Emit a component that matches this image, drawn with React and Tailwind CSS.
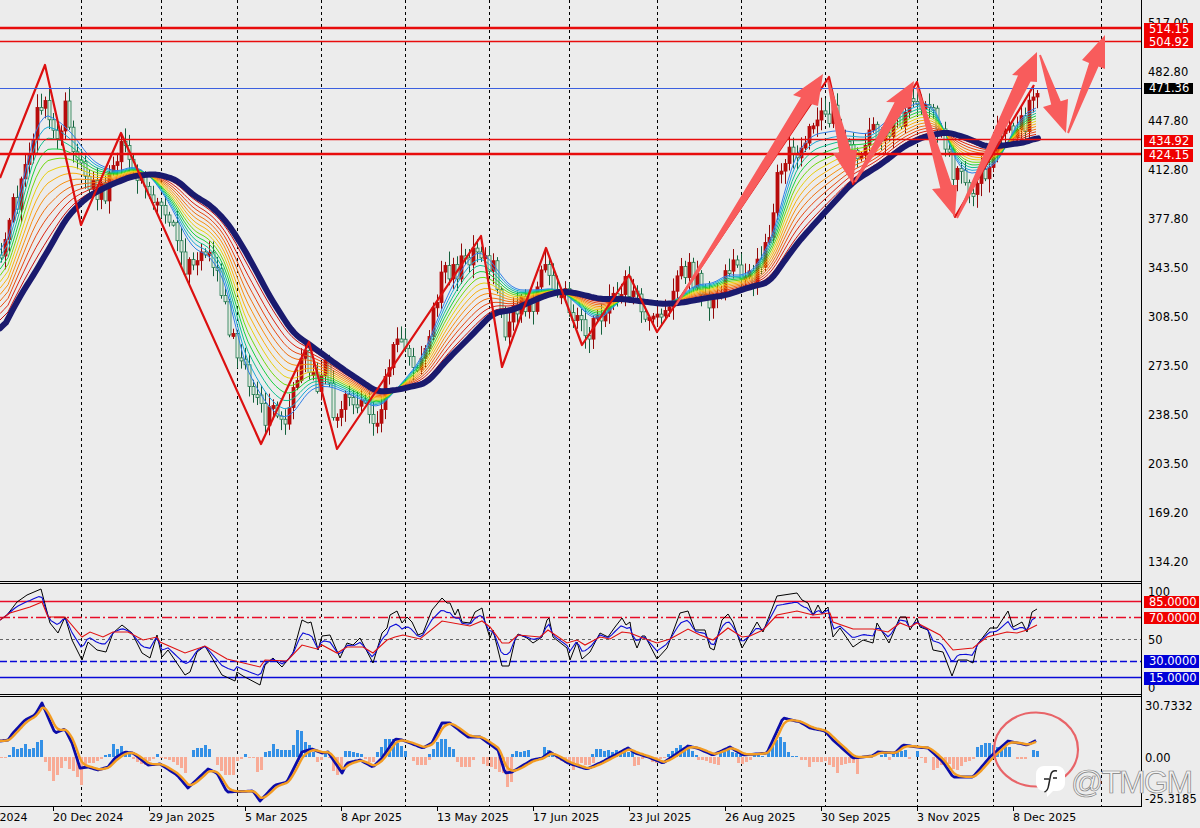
const gridX = [81.5, 161.5, 237.5, 321.5, 405.5, 489.5, 569.5, 657.5, 741.5, 825.5, 917.5, 993.5, 1101.5];

const priceTicks = ['517.00', '482.80', '447.80', '412.80', '377.80', '343.50', '308.50', '273.50', '238.50', '203.50', '169.20', '134.20'];

const dates = ['14 Nov 2024', '20 Dec 2024', '29 Jan 2025', '5 Mar 2025', '8 Apr 2025', '13 May 2025', '17 Jun 2025', '23 Jul 2025', '26 Aug 2025', '30 Sep 2025', '3 Nov 2025', '8 Dec 2025'];

// everything below is in page pixels, read off the picture
const navyPts = [[0,334],[20,296],[33,276],[50,247],[67,217],[87,197],[110,185],[133,176],[157,174],[177,180],[193,195],[210,205],[227,222],[243,247],[260,278],[270,297],[293,333],[317,350],[340,367],[377,392],[397,390],[427,383],[447,360],[470,337],[493,313],[513,310],[530,302],[547,295],[563,291],[580,294],[600,299],[623,299],[647,302],[663,304],[680,303],[707,298],[727,295],[747,288],[770,282],[780,267],[800,240],[827,210],[853,182],[883,163],[903,147],[923,137],[947,132],[967,138],[987,147],[1007,145],[1027,142],[1038,137]];

const fastPts = [[0,263],[15,215],[30,150],[40,113],[55,118],[67,128],[80,143],[90,160],[117,173],[133,165],[147,173],[160,188],[177,217],[190,247],[203,253],[213,257],[223,280],[230,293],[240,353],[257,390],[277,417],[293,417],[307,390],[327,385],[347,393],[363,400],[377,410],[387,400],[407,377],[423,357],[437,320],[453,283],[473,253],[483,250],[497,270],[513,290],[537,290],[557,288],[573,300],[593,320],[607,317],[617,300],[633,297],[657,307],[677,300],[697,283],[713,285],[727,273],[743,277],[760,263],[770,240],[780,215],[790,165],[810,135],[840,130],[870,135],[900,110],[925,100],[940,115],[950,150],[965,175],[987,170],[1003,157],[1013,127],[1037,103]];

const candlePts = [[0,255],[10,215],[20,190],[30,140],[40,100],[45,95],[50,120],[60,130],[65,105],[70,140],[80,170],[90,185],[100,190],[105,195],[115,150],[125,150],[135,170],[145,190],[155,205],[165,215],[175,235],[185,280],[195,250],[205,245],[215,270],[225,310],[235,345],[245,375],[255,400],[265,420],[275,415],[285,425],[295,385],[305,350],[315,385],[325,370],[335,420],[345,395],[355,400],[365,395],[375,425],[385,380],[395,345],[405,350],[415,360],[425,360],[435,300],[445,265],[455,270],[465,265],[475,240],[485,262],[495,275],[505,345],[515,300],[525,310],[535,300],[545,265],[555,305],[565,300],[575,320],[585,335],[595,320],[605,310],[615,295],[625,285],[635,295],[645,320],[655,320],[665,305],[675,285],[685,270],[695,280],[705,295],[715,300],[725,270],[735,265],[745,280],[755,275],[765,250],[775,190],[785,160],[795,150],[805,135],[815,130],[825,115],[835,115],[845,145],[855,155],[865,145],[875,130],[885,135],[895,120],[905,115],[915,95],[925,100],[935,120],[945,140],[955,175],[965,185],[975,190],[985,175],[995,140],[1005,130],[1015,125],[1025,125],[1035,90]];

const zigzag = [[0,178],[45,65],[81,225],[121,133],[261,444],[309,342],[337,449],[481,236],[502,367],[546,248],[582,345],[629,275],[657,332],[829,77],[853,184],[917,82],[955,217],[1034,85]];

const arrows = [
  { tail: [676,305], tip: [823,74], b1: [793,95], b2: [818,106], hw: 6 },
  { tail: [828,80], tip: [853,184], b1: [833,153], b2: [857,150], hw: 6 },
  { tail: [855,182], tip: [914,81], b1: [886,102], b2: [911,107], hw: 6 },
  { tail: [917,87], tip: [955,217], b1: [932,189], b2: [957,185], hw: 6 },
  { tail: [957,218], tip: [1037,52], b1: [1012,75], b2: [1037,82], hw: 7 },
  { tail: [1040,55], tip: [1066,133], b1: [1043,107], b2: [1068,99], hw: 5 },
  { tail: [1068,133], tip: [1105,35], b1: [1082,60], b2: [1105,69], hw: 5 },
];

const ribbonColors = ['#2f7fe8', '#18a8d8', '#10c090', '#18d040', '#70d810', '#e8d010', '#f8b010', '#f89010', '#f07010', '#e84810', '#dc2410', '#c81010'];

const rsiBlack = [[0,620],[7,615],[17,602],[27,595],[41,589],[50,623],[58,633],[65,617],[72,640],[82,660],[88,642],[97,650],[106,652],[113,633],[122,625],[132,633],[142,653],[150,658],[157,635],[162,657],[168,650],[185,675],[190,672],[197,652],[205,646],[222,675],[235,681],[237,672],[243,676],[260,685],[265,665],[273,658],[282,667],[293,653],[302,620],[308,623],[311,622],[318,650],[322,636],[330,635],[340,658],[347,643],[353,645],[360,638],[373,663],[382,633],[387,628],[390,615],[397,611],[402,623],[407,617],[412,622],[418,635],[423,633],[432,610],[442,598],[447,603],[450,603],[455,615],[458,609],[462,622],[470,623],[475,612],[482,608],[485,622],[490,638],[493,630],[502,666],[509,666],[515,640],[518,634],[527,638],[533,643],[542,637],[547,620],[549,618],[553,637],[567,648],[570,660],[577,642],[582,659],[590,652],[600,633],[608,637],[615,627],[622,618],[626,625],[630,622],[632,635],[637,648],[642,636],[645,636],[657,659],[667,648],[680,613],[688,611],[695,630],[705,630],[710,648],[714,650],[722,620],[728,614],[733,622],[742,648],[748,638],[757,622],[763,632],[777,596],[797,593],[802,600],[808,603],[813,615],[818,605],[822,613],[828,607],[833,637],[840,628],[853,647],[863,640],[873,643],[877,623],[889,643],[900,617],[906,617],[910,630],[917,618],[920,627],[928,630],[933,650],[943,652],[952,676],[958,660],[967,660],[973,663],[977,645],[990,628],[997,628],[1008,611],[1013,627],[1022,622],[1027,632],[1032,612],[1037,609]];

const rsiRed = [[0,620],[10,613],[30,607],[42,602],[48,617],[65,617],[82,637],[90,632],[103,637],[113,632],[128,632],[143,640],[157,637],[160,642],[185,653],[205,646],[227,659],[260,667],[265,660],[287,661],[302,645],[317,649],[322,645],[337,653],[347,647],[363,647],[373,653],[387,640],[395,637],[403,635],[420,639],[442,621],[470,626],[482,621],[490,627],[502,643],[509,643],[518,635],[540,637],[548,630],[567,643],[577,640],[585,645],[600,637],[610,639],[622,632],[630,633],[640,637],[657,643],[670,639],[688,629],[700,635],[713,640],[728,628],[742,637],[750,636],[763,630],[777,615],[797,611],[813,615],[830,613],[833,622],[853,629],[873,629],[888,632],[900,623],[910,627],[917,623],[940,635],[953,650],[973,648],[987,637],[1007,632],[1017,633],[1027,630],[1037,625]];

const macdMain = [[0,741],[8,740],[13,733],[25,720],[35,715],[42,703],[48,717],[55,733],[65,729],[72,743],[80,768],[88,767],[98,770],[108,767],[115,758],[125,752],[133,753],[148,765],[160,764],[177,775],[188,788],[208,769],[217,773],[227,792],[253,791],[260,801],[275,785],[287,782],[302,752],[312,749],[322,753],[328,752],[342,773],[347,763],[360,760],[373,767],[382,758],[395,739],[402,740],[423,748],[432,743],[442,723],[450,723],[468,737],[480,737],[498,750],[505,773],[512,772],[532,760],[542,758],[550,752],[568,763],[587,769],[600,763],[628,748],[635,753],[648,757],[663,763],[688,746],[697,748],[713,755],[730,747],[743,755],[767,753],[783,718],[800,722],[810,728],[825,731],[833,740],[853,758],[872,756],[878,752],[895,753],[903,745],[917,747],[928,748],[943,762],[953,777],[973,777],[990,757],[1008,741],[1027,745],[1037,740]];

// histogram runs: start x, then signed bar heights every 4px
const macdBars = [
  [1, -1,-1,2,10,8,9,13,8,9,15,17,-5,-14,-24,-18,-11,-4,-12,-14,-20,-28,-9,-6,-6,-4,-2,2,3,13,8,11,6,3,-2,-5,-7,-8,-4,-2,3,-1,-2,-3,-5,-8,-11,-16,0,7,9,9,12,8,0,-8,-14,-18,-18,-18,-4,-2,3,-1,-1,-15,-13,5,6,13,8,7,7,7,12,27,26,15,12,5,-5,-3,5,-1,-14,-18,-14,6,6,5,4,3,-2,-5,-5,5,10,18,18],
  [393, 18,14,11,6],
  [413, -4,-8,-8,-8,-3],
  [429, 3,8,15,18,18,10,8],
  [457, -5,-10,-10,-10,-3],
  [483, -7,-9,-10,-12,-15,-16,-30,-25],
  [512, 3,6,5,6,7],
  [544, 10,7,4],
  [557, -2,-4,-6,-7,-13,-8,-6,-8,-8,-6],
  [592, 3,8,8,6,7,5,7,6,7,5,6],
  [634, -9,-8,-2],
  [652, -5,-6,-2,-1],
  [668, 3,6,9,12,8,8,6,2],
  [698, -3,-3,-4,-6,-7,-8],
  [720, 6,7,7,5,4,2],
  [738, -6,-7,-5,-3],
  [754, 2,4,1],
  [768, 5,13,17,20,15,5,1,1],
  [801, -3,-3,-10,-5,-5,-5,-4,-8,-10,-16,-8,-7,-6,-6,-17],
  [881, 2,3,-3,3,5,6,7,-2],
  [917, 6,-1,-6],
  [933, -13,-11,-8,-8,-7,-12,-13,-9,-5,-4,-2],
  [977, 10,12,14,14,12,10,8,10,10],
  [1017, -2,-2,-2],
  [1033, 7,6],
];

const interp = (pts, x) => {
  if (x <= pts[0][0]) return pts[0][1];
  for (let i = 1; i < pts.length; i++) {
    if (x <= pts[i][0]) {
      const [x0, y0] = pts[i - 1];
      const [x1, y1] = pts[i];
      return y0 + ((y1 - y0) * (x - x0)) / (x1 - x0);
    }
  }
  return pts[pts.length - 1][1];
};

const toD = (pts) => pts.map((p, i) => `${i ? 'L' : 'M'}${p[0].toFixed(1)} ${p[1].toFixed(1)}`).join('');

const sample = (fn, from, to, step) => {
  const out = [];
  for (let x = from; x <= to; x += step) out.push([x, fn(x)]);
  return out;
};

const smooth = (pts, r) =>
  pts.map((p, i) => {
    let sum = 0;
    let n = 0;
    for (let j = Math.max(0, i - r); j <= Math.min(pts.length - 1, i + r); j++) {
      sum += pts[j][1];
      n++;
    }
    return [p[0], sum / n];
  });

const rnd = (i) => {
  const v = Math.sin(i * 127.1 + 11.7) * 43758.5453;
  return v - Math.floor(v);
};

const buildCandles = () => {
  const list = [];
  let prev = interp(candlePts, 0);
  for (let i = 0; i < 260; i++) {
    const x = 1 + i * 4;
    const c = interp(candlePts, x) + (rnd(i) - 0.5) * 24;
    const top = Math.min(prev, c);
    const bot = Math.max(prev, c);
    list.push({
      x,
      up: c < prev,
      top,
      h: Math.max(bot - top, 3),
      hi: top - 2 - rnd(i + 300) * 12,
      lo: bot + 2 + rnd(i + 600) * 12,
    });
    prev = c;
  }
  return list;
};

const arrowPoints = ({ tail, tip, b1, b2, hw }) => {
  const mx = (b1[0] + b2[0]) / 2;
  const my = (b1[1] + b2[1]) / 2;
  const dx = tip[0] - tail[0];
  const dy = tip[1] - tail[1];
  const len = Math.hypot(dx, dy);
  let nx = -dy / len;
  let ny = dx / len;
  // keep the normal pointing at b1
  if ((b1[0] - mx) * nx + (b1[1] - my) * ny < 0) {
    nx = -nx;
    ny = -ny;
  }
  const t = ((mx - tail[0]) * dx + (my - tail[1]) * dy) / (len * len);
  const sx = tail[0] + dx * t;
  const sy = tail[1] + dy * t;
  return [
    [tail[0] + nx, tail[1] + ny],
    [sx + nx * hw, sy + ny * hw],
    b1,
    tip,
    b2,
    [sx - nx * hw, sy - ny * hw],
    [tail[0] - nx, tail[1] - ny],
  ]
    .map((p) => `${p[0].toFixed(1)},${p[1].toFixed(1)}`)
    .join(' ');
};

const GridLines = ({ y1, y2 }) =>
  gridX.map((x) => <line key={x} x1={x} x2={x} y1={y1} y2={y2} stroke="#000" strokeWidth="1" strokeDasharray="3 3" />);

const HLine = ({ y, color, w = 1.4, dash }) => (
  <line x1="0" x2="1141" y1={y} y2={y} stroke={color} strokeWidth={w} strokeDasharray={dash} />
);

const MainChart = () => {
  const candles = buildCandles();
  const navy = smooth(sample((x) => interp(navyPts, x), 0, 1038, 3), 2);
  const ribbons = ribbonColors.map((color, k) => {
    const t = 1 - k / ribbonColors.length;
    const pts = sample((x) => interp(navyPts, x) + t * (interp(fastPts, x) - interp(navyPts, x)), 0, 1037, 4);
    return { color, d: toD(smooth(pts, 2)) };
  });

  return (
    <svg className="block h-[581px] w-[1141px]" viewBox="0 0 1141 581">
      <GridLines y1={0} y2={581} />
      {candles.map((c) => (
        <g key={c.x}>
          <line x1={c.x + 0.5} x2={c.x + 0.5} y1={c.hi} y2={c.lo} stroke={c.up ? '#900808' : '#14603c'} strokeWidth="1" />
          <rect
            x={c.x - 1}
            y={c.top}
            width="3"
            height={c.h}
            fill={c.up ? '#b80c0c' : '#dfe9df'}
            stroke={c.up ? '#b80c0c' : '#1f7a4e'}
            strokeWidth="0.8"
          />
        </g>
      ))}
      {ribbons.map((r) => (
        <path key={r.color} d={r.d} fill="none" stroke={r.color} strokeWidth="1" />
      ))}
      <path d={toD(navy)} fill="none" stroke="#1a1a6e" strokeWidth="6" strokeLinejoin="round" strokeLinecap="round" />
      <path d={toD(zigzag)} fill="none" stroke="#dc1010" strokeWidth="2.2" strokeLinejoin="round" />
      <HLine y={28} color="#e80c0c" w={2.6} />
      <HLine y={41.5} color="#e80c0c" />
      <HLine y={88.5} color="#3c60e0" w={1.1} />
      <HLine y={139.5} color="#e80c0c" />
      <HLine y={154} color="#e80c0c" w={2.6} />
      {arrows.map((a) => (
        <polygon key={a.tip[0]} points={arrowPoints(a)} fill="#f85c5c" />
      ))}
    </svg>
  );
};

const RsiChart = () => {
  const blue = sample((x) => (interp(rsiBlack, x) + interp(rsiRed, x)) / 2, 0, 1037, 3);
  return (
    <svg className="block h-[110px] w-[1141px]" viewBox="0 584 1141 110">
      <GridLines y1={584} y2={694} />
      <HLine y={601.5} color="#e80c28" />
      <HLine y={617.5} color="#e80c28" dash="10 3 2 3" />
      <HLine y={639.5} color="#666" w={1} dash="3 3" />
      <HLine y={661.5} color="#0808d8" dash="7 3" />
      <HLine y={677.5} color="#0808d8" />
      <path d={toD(rsiBlack)} fill="none" stroke="#000" strokeWidth="1" />
      <path d={toD(blue)} fill="none" stroke="#0c0cd8" strokeWidth="1.1" />
      <path d={toD(rsiRed)} fill="none" stroke="#e01010" strokeWidth="1.1" />
    </svg>
  );
};

const MacdChart = () => {
  const bars = [];
  macdBars.forEach(([start, ...vals]) => {
    vals.forEach((v, i) => {
      if (v !== 0) bars.push({ x: start + i * 4, v });
    });
  });
  const main = sample((x) => interp(macdMain, x), 0, 1037, 2);
  const signal = [];
  main.forEach((p, i) => {
    signal.push([p[0], i ? signal[i - 1][1] + (p[1] - signal[i - 1][1]) * 0.38 : p[1]]);
  });

  return (
    <svg className="block h-[109px] w-[1141px]" viewBox="0 697 1141 109">
      <GridLines y1={697} y2={806} />
      {bars.map((b) => (
        <rect
          key={b.x}
          x={b.x - 1}
          y={b.v > 0 ? 757 - b.v : 757}
          width="3"
          height={Math.abs(b.v)}
          fill={b.v > 0 ? '#3390e6' : '#f8ab96'}
        />
      ))}
      <path d={toD(main)} fill="none" stroke="#0c0ca8" strokeWidth="2.8" strokeLinejoin="round" />
      <path d={toD(signal)} fill="none" stroke="#f39c22" strokeWidth="2.4" strokeLinejoin="round" />
      <ellipse cx="1036" cy="749.5" rx="42" ry="37" fill="none" stroke="#e86468" strokeWidth="2.2" />
    </svg>
  );
};

const Tag = ({ className, children }) => (
  <div className={`absolute left-[2px] flex items-center pl-[5px] text-white ${className}`}>{children}</div>
);

export default function App() {
  return (
    <div
      className="relative h-[828px] w-[1200px] overflow-hidden bg-[#ececec] text-[11.5px] leading-[13px] text-black"
      style={{ fontFamily: '"DejaVu Sans", sans-serif' }}
    >
      <div className="flex h-[807px]">
        <div className="flex w-[1142px] flex-col border-r border-black">
          <div className="h-[582px] border-b border-black">
            <MainChart />
          </div>
          <div className="mt-px h-[112px] border-y border-black">
            <RsiChart />
          </div>
          <div className="mt-px h-[111px] border-y border-black">
            <MacdChart />
          </div>
        </div>

        <div className="relative w-[58px]">
          <div className="flex h-[583px] flex-col gap-[36px] pl-[6px] pt-[17px]">
            {priceTicks.map((t) => (
              <div key={t} className="h-[13px]">{t}</div>
            ))}
          </div>
          <div className="flex h-[113px] flex-col gap-[35px] pl-[6px] pt-[3px]">
            <div className="h-[13px]">100</div>
            <div className="h-[13px]">50</div>
            <div className="h-[13px]">0</div>
          </div>
          <div className="pl-[3px] pt-[4px]">
            <div className="h-[13px]">30.7332</div>
            <div className="mt-[39px] h-[13px]">0.00</div>
            <div className="mt-[28px] h-[13px]">-25.3185</div>
          </div>

          <Tag className="top-[23px] h-[13px] w-[49px] bg-[#f00000]">514.15</Tag>
          <Tag className="top-[36px] h-[12px] w-[49px] bg-[#f00000]">504.92</Tag>
          <Tag className="top-[83px] h-[11px] w-[49px] bg-black">471.36</Tag>
          <Tag className="top-[135px] h-[12px] w-[49px] bg-[#f00000]">434.92</Tag>
          <Tag className="top-[149px] h-[13px] w-[49px] bg-[#f00000]">424.15</Tag>
          <Tag className="top-[596px] h-[12px] w-[55px] bg-[#f00000]">85.0000</Tag>
          <Tag className="top-[612px] h-[12px] w-[55px] bg-[#f00000]">70.0000</Tag>
          <Tag className="top-[655px] h-[13px] w-[55px] bg-[#0000d8]">30.0000</Tag>
          <Tag className="top-[672px] h-[13px] w-[55px] bg-[#0000d8]">15.0000</Tag>
        </div>
      </div>

      <div className="ml-[-43px] flex h-[21px] text-[11px]">
        {dates.map((d) => (
          <div key={d} className="h-full w-[96px] shrink-0 whitespace-nowrap">
            <div className="h-[4px] w-px bg-black" />
            <div>{d}</div>
          </div>
        ))}
      </div>

      {/* watermark */}
      <div className="absolute left-[1036px] top-[765px] flex items-center gap-[6px]">
        <svg width="29" height="33" viewBox="0 0 29 33">
          <path
            d="M8 1h13a8 8 0 0 1 8 8v9c0 5-4 8-8 8h-4l-6 6 0-6H8a8 8 0 0 1-8-8V9a8 8 0 0 1 8-8z"
            fill="#ffffff"
          />
          <path d="M21 6c-4-1-6 1-6.500 5l-2 10c-.5 3-1.500 5-4 6M8 14h5M17 13h4" fill="none" stroke="#222" strokeWidth="1.500" />
        </svg>
        <div
          className="text-[32px] leading-[32px] tracking-[-2px] text-[#f2f2f2] [-webkit-text-stroke:0.7px_#808080]"
          style={{ fontFamily: '"Liberation Sans", sans-serif' }}
        >
          @TMGM
        </div>
      </div>
    </div>
  );
}
